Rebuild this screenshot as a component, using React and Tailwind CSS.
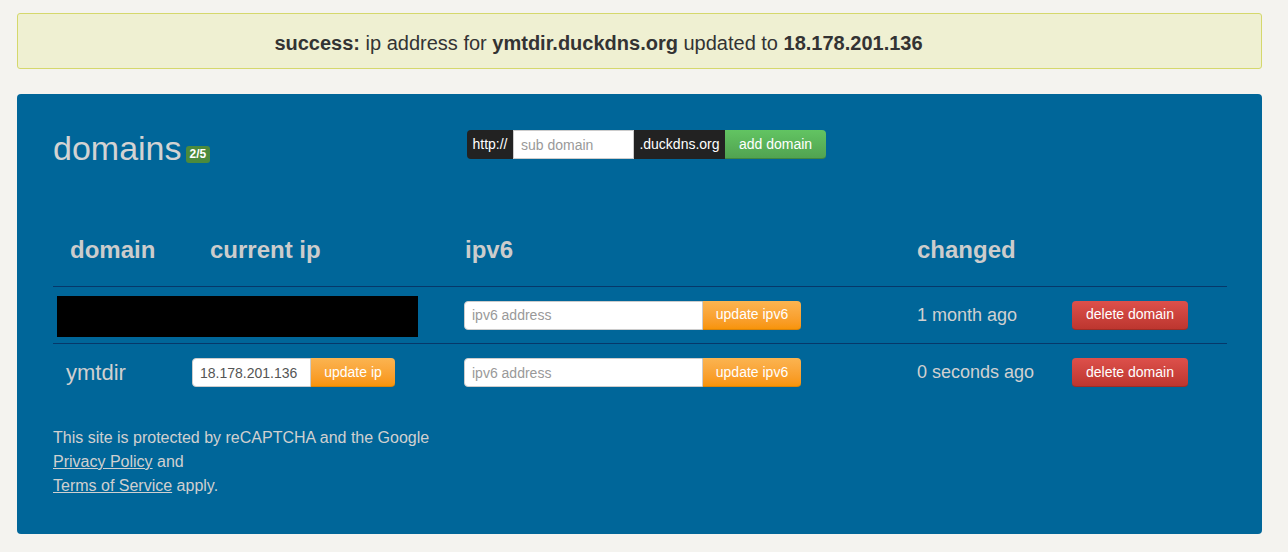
import React from 'react';

const font = { fontFamily: '"Liberation Sans", Arial, sans-serif' };

const inputCls =
  'h-[29px] bg-white text-[14px] text-[#555] px-[7px] outline-none placeholder:text-[#999] rounded-l-[4px] border border-[#ccc]';
const orangeBtn =
  'h-[29px] text-[14px] text-white rounded-r-[4px] bg-gradient-to-b from-[#fbb450] to-[#f89406] border-b border-[#d9830a]';
const redBtn =
  'h-[29px] w-[116px] text-[14px] text-white rounded-[4px] bg-gradient-to-b from-[#dd504b] to-[#bd362f] border-b border-[#9d2d27]';

const IpInput = ({ value, placeholder, width, btn, btnWidth }) => (
  <div className="flex">
    <input
      defaultValue={value}
      placeholder={placeholder}
      className={`${inputCls} ${width}`}
    />
    <button className={`${orangeBtn} ${btnWidth}`}>{btn}</button>
  </div>
);

const App = () => {
  return (
    <div className="min-h-screen bg-[#f4f3ef] pl-[17px] pr-[26px] pt-[13px] pb-[19px]" style={font}>
      <div className="h-[56px] bg-[#eff0d2] border border-[#d5d86c] rounded-[3px] flex items-center justify-center pr-[82px] pt-[4px] text-[20px] text-[#333]">
        <span>
          <b>success:</b> ip address for <b>ymtdir.duckdns.org</b> updated to <b>18.178.201.136</b>
        </span>
      </div>

      <div className="mt-[25px] bg-[#006699] rounded-[4px] pl-[36px] pr-[35px] pt-[34px] pb-[36px] text-[#d0d0d0]">
        <div className="flex items-start">
          <div className="w-[414px] flex items-end h-[40px]">
            <span className="text-[34px] leading-[40px] text-[#d3d3d3]">domains</span>
            <span className="ml-[4px] mb-[5px] h-[17px] px-[4px] rounded-[3px] bg-[#4b8a3c] text-white text-[12px] font-bold leading-[17px]">
              2/5
            </span>
          </div>
          <div className="flex mt-[2px] text-[14px]">
            <span className="h-[29px] w-[46px] bg-[#222] text-white rounded-l-[4px] flex items-center justify-center">
              http://
            </span>
            <input
              placeholder="sub domain"
              className="h-[29px] w-[121px] bg-white px-[7px] text-[#555] outline-none placeholder:text-[#999] border border-[#ccc]"
            />
            <span className="h-[29px] w-[91px] bg-[#222] text-white flex items-center justify-center">
              .duckdns.org
            </span>
            <button className="h-[29px] w-[101px] text-white rounded-r-[4px] bg-gradient-to-b from-[#62c462] to-[#51a351] border-b border-[#418641]">
              add domain
            </button>
          </div>
        </div>

        <div className="mt-[68px]">
          <div className="grid grid-cols-[139px_272px_453px_155px_1fr] text-[24px] font-bold leading-[28px] pb-[22px] border-b border-[#06386a] text-[#cccccc]">
            <div className="pl-[17px]">domain</div>
            <div className="pl-[18px]">current ip</div>
            <div className="pl-[1px]">ipv6</div>
            <div>changed</div>
            <div></div>
          </div>

          <div className="grid grid-cols-[139px_272px_453px_155px_1fr] items-center h-[57px] border-b border-[#06386a] text-[18px]">
            <div className="col-span-2 ml-[4px] mt-[2px] h-[41px] w-[361px] bg-black"></div>
            <IpInput placeholder="ipv6 address" width="w-[239px]" btn="update ipv6" btnWidth="w-[98px]" />
            <div>1 month ago</div>
            <div>
              <button className={redBtn}>delete domain</button>
            </div>
          </div>

          <div className="grid grid-cols-[139px_272px_453px_155px_1fr] items-center h-[57px] text-[18px]">
            <div className="pl-[13px] text-[22px]">ymtdir</div>
            <IpInput value="18.178.201.136" width="w-[119px]" btn="update ip" btnWidth="w-[84px]" />
            <IpInput placeholder="ipv6 address" width="w-[239px]" btn="update ipv6" btnWidth="w-[98px]" />
            <div>0 seconds ago</div>
            <div>
              <button className={redBtn}>delete domain</button>
            </div>
          </div>
        </div>

        <div className="mt-[25px] text-[16px] leading-[24px]">
          <div>This site is protected by reCAPTCHA and the Google</div>
          <div>
            <a className="underline">Privacy Policy</a> and
          </div>
          <div>
            <a className="underline">Terms of Service</a> apply.
          </div>
        </div>
      </div>
    </div>
  );
};

export default App;
